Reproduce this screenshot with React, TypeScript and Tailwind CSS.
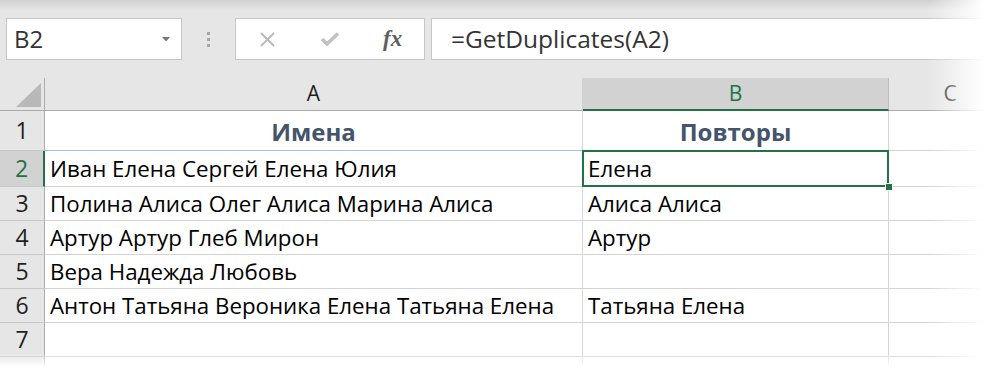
const rows = [
  { n: 1, a: 'Имена', b: 'Повторы', head: true, h: 'h-[40px]' },
  { n: 2, a: 'Иван Елена Сергей Елена Юлия', b: 'Елена', h: 'h-[36px]' },
  { n: 3, a: 'Полина Алиса Олег Алиса Марина Алиса', b: 'Алиса Алиса', h: 'h-[34px]' },
  { n: 4, a: 'Артур Артур Глеб Мирон', b: 'Артур', h: 'h-[34px]' },
  { n: 5, a: 'Вера Надежда Любовь', b: '', h: 'h-[34px]' },
  { n: 6, a: 'Антон Татьяна Вероника Елена Татьяна Елена', b: 'Татьяна Елена', h: 'h-[34px]' },
  { n: 7, a: '', b: '', h: 'h-[34px]' },
  { n: 8, a: '', b: '', h: 'h-[34px]' },
]

function FormulaBar() {
  return (
    <div className="flex items-start h-[78px] pt-[18px] bg-[#e6e6e6]">
      {/* Name box */}
      <div className="ml-[6px] w-[176px] h-[42px] bg-white border border-[#c6c6c6] flex items-center pl-[7px] pr-[11px]">
        <span className="text-[24px] text-[#333] leading-none">B2</span>
        <svg className="ml-auto" width="8" height="5" viewBox="0 0 8 5">
          <path d="M0 0H8L4 4.5Z" fill="#777" />
        </svg>
      </div>

      {/* Grip dots */}
      <div className="w-[53px] h-[42px] flex flex-col items-center justify-center gap-[3px]">
        <div className="w-[3px] h-[3px] bg-[#a6a6a6]" />
        <div className="w-[3px] h-[3px] bg-[#a6a6a6]" />
        <div className="w-[3px] h-[3px] bg-[#a6a6a6]" />
      </div>

      {/* Cancel / enter / fx */}
      <div className="w-[190px] h-[42px] bg-white border border-[#c6c6c6] grid grid-cols-3 items-center">
        <div className="flex justify-center">
          <svg width="17" height="17" viewBox="0 0 17 17">
            <path d="M2 2L15 15M15 2L2 15" stroke="#b8b8b8" strokeWidth="1.8" />
          </svg>
        </div>
        <div className="flex justify-center">
          <svg width="20" height="16" viewBox="0 0 20 16">
            <path d="M2 8L7 13L18 2.5" stroke="#c2c2c2" strokeWidth="3.6" fill="none" />
          </svg>
        </div>
        <div className="flex justify-center">
          <span className="font-['Liberation_Serif',serif] italic font-bold text-[23px] text-[#5f5f5f] leading-none -mt-[2px]">
            fx
          </span>
        </div>
      </div>

      {/* Formula input */}
      <div className="ml-[6px] flex-1 -mr-[20px] h-[42px] bg-white border border-[#c6c6c6] flex items-center pl-[19px]">
        <span className="text-[24.5px] text-[#333] leading-none">=GetDuplicates(A2)</span>
      </div>
    </div>
  )
}

function Grid() {
  return (
    <div className="grid grid-cols-[45px_538px_306px_130px]">
      {/* Column headers */}
      <div className="h-[33px] bg-[#e6e6e6] border-r border-b border-[#ababab] flex items-end justify-end pr-[3px] pb-[3px]">
        <svg width="25" height="24" viewBox="0 0 25 24">
          <path d="M25 0V24H0Z" fill="#b8b8b8" />
        </svg>
      </div>
      <div className="h-[33px] bg-[#e6e6e6] border-r border-[#cfcfcf] border-b border-b-[#ababab] flex items-center justify-center text-[21px] text-[#1f1f1f]">
        A
      </div>
      <div className="h-[33px] bg-[#d2d2d2] border-r border-[#bdbdbd] border-b-2 border-b-[#217346] flex items-center justify-center text-[21px] text-[#217346]">
        B
      </div>
      <div className="h-[33px] bg-[#e6e6e6] border-b border-[#ababab] flex items-center justify-center text-[21px] text-[#1f1f1f] pr-[8px]">
        C
      </div>

      {rows.map((r) => {
        const sel = r.n === 2
        return [
          <div
            key={`n${r.n}`}
            className={`${r.h} flex items-center justify-center text-[23px] border-b border-b-[#c8c8c8] ${
              sel
                ? 'bg-[#d2d2d2] text-[#217346] border-r-2 border-r-[#217346]'
                : 'bg-[#e6e6e6] text-[#1f1f1f] border-r border-r-[#ababab]'
            }`}
          >
            {r.n < 8 ? r.n : ''}
          </div>,
          <div
            key={`a${r.n}`}
            className={`${r.h} flex items-center border-r border-r-[#d4d4d4] border-b whitespace-nowrap ${
              r.head
                ? 'justify-center pt-[3px] font-bold text-[24px] text-[#44546a] border-b-[#a9bce4]'
                : 'pl-[5px] pt-[1px] text-[22.3px] text-black border-b-[#d4d4d4]'
            }`}
          >
            {r.a}
          </div>,
          <div
            key={`b${r.n}`}
            className={`${r.h} relative flex items-center border-r border-b border-[#d4d4d4] whitespace-nowrap ${
              r.head
                ? 'justify-center pt-[3px] font-bold text-[24px] text-[#44546a]'
                : 'pl-[5px] pt-[1px] text-[22.3px] text-black'
            }`}
          >
            {r.b}
            {sel && (
              <>
                <div className="absolute -top-px -left-px right-[-1px] -bottom-px border-2 border-[#217346]" />
                <div className="absolute -right-[5px] -bottom-[5px] w-[8px] h-[8px] bg-[#217346] border border-white z-10" />
              </>
            )}
          </div>,
          <div key={`c${r.n}`} className={`${r.h} border-b border-[#d4d4d4]`} />,
        ]
      })}
    </div>
  )
}

export default function App() {
  return (
    <div className="relative w-[984px] h-[367px] overflow-hidden bg-white font-['Open_Sans',sans-serif]">
      <FormulaBar />
      <Grid />

      {/* Screenshot edge shading */}
      <div className="absolute top-0 left-0 w-full h-[10px] bg-linear-to-b from-black/10 to-black/0" />
      <div className="absolute top-0 right-0 h-full w-[56px] bg-linear-to-r from-white/0 to-white" />
      <div className="absolute bottom-0 left-0 w-full h-[14px] bg-linear-to-b from-white/0 to-white" />
    </div>
  )
}
